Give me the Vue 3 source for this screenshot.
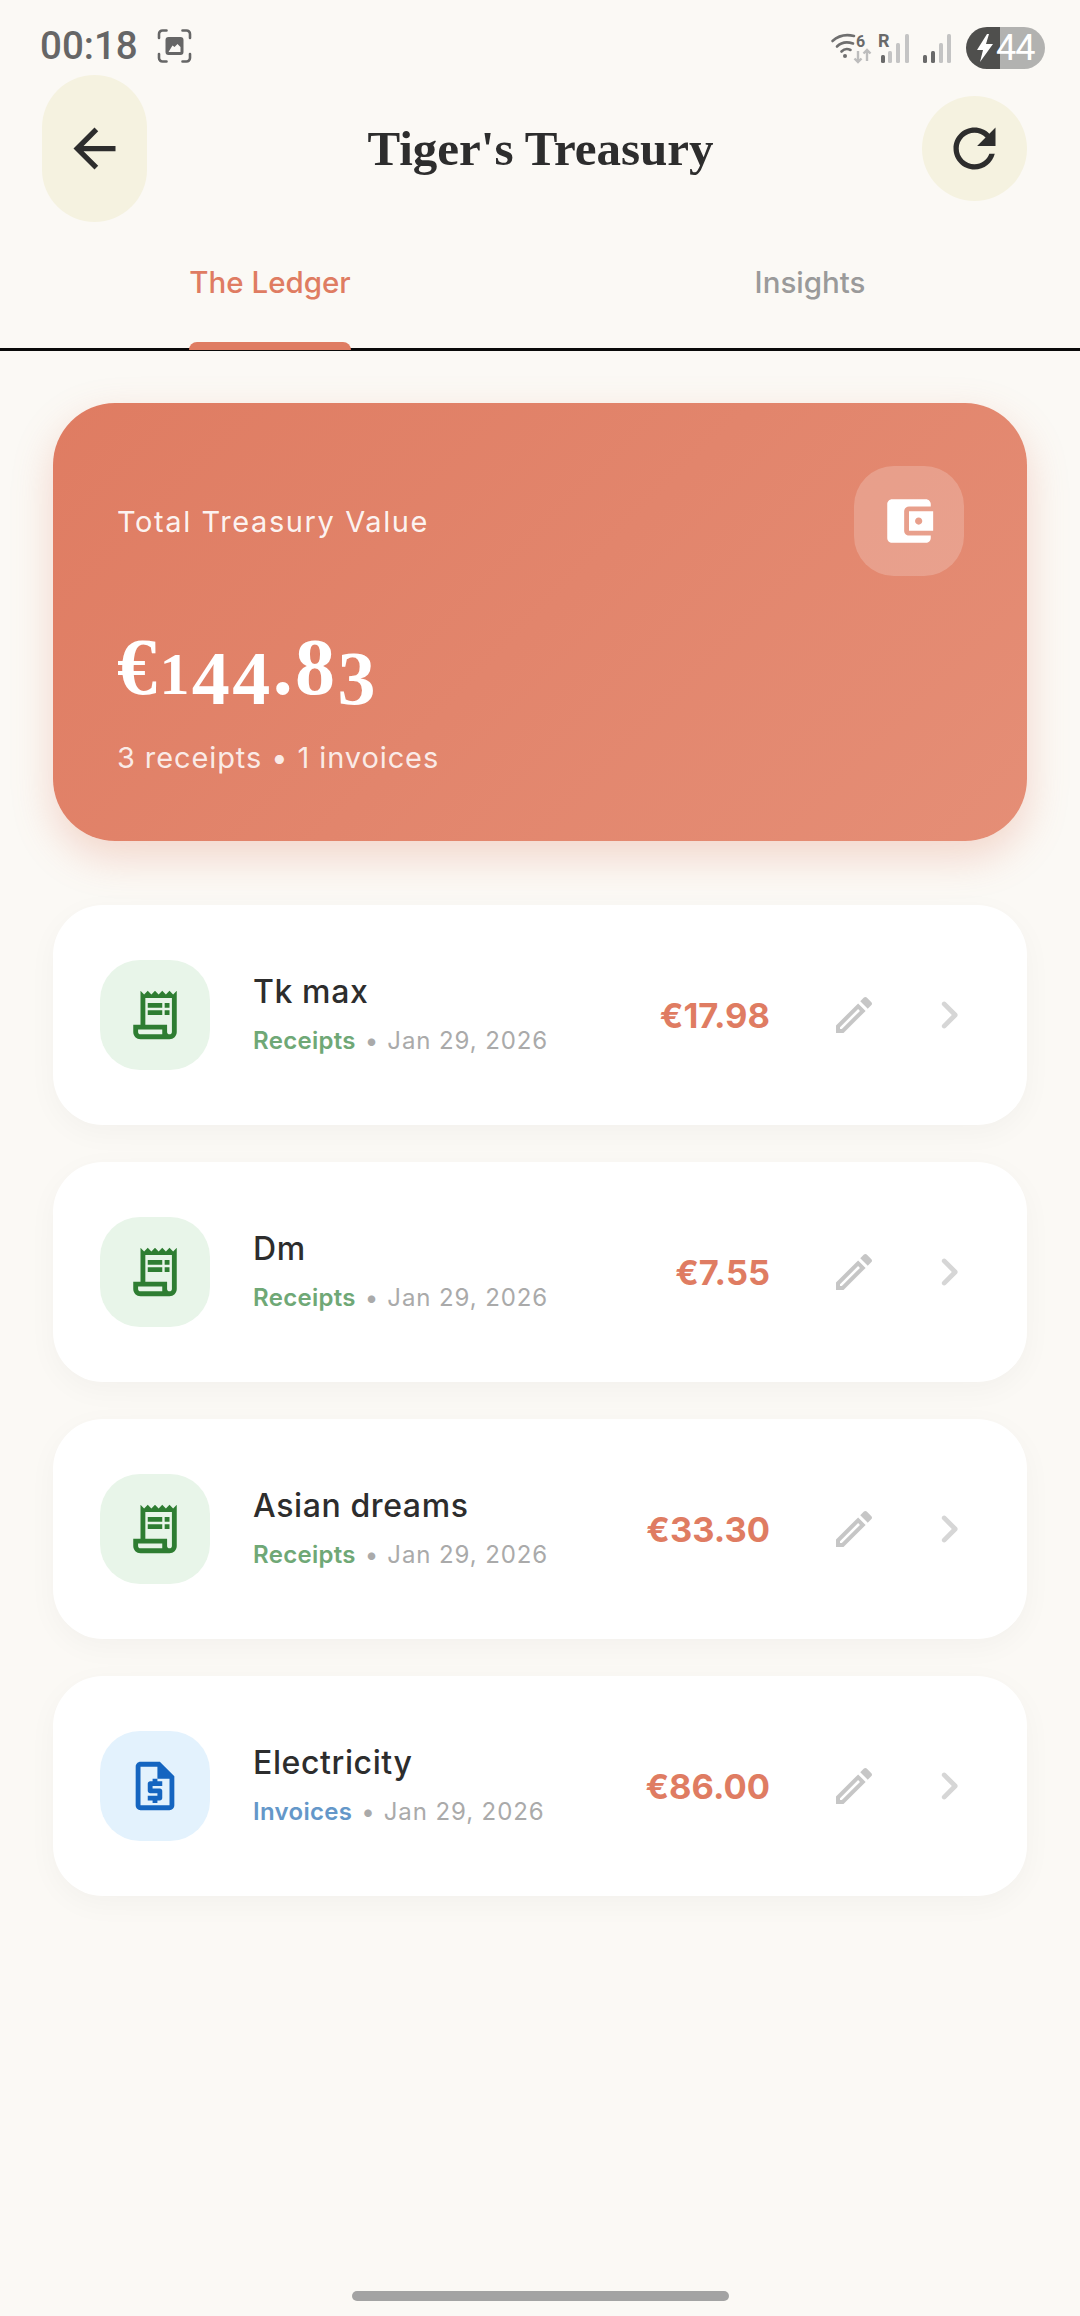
<script setup>
const items = [
  { name: 'Tk max', kind: 'Receipts', type: 'receipt', date: 'Jan 29, 2026', amount: '€17.98' },
  { name: 'Dm', kind: 'Receipts', type: 'receipt', date: 'Jan 29, 2026', amount: '€7.55' },
  { name: 'Asian dreams', kind: 'Receipts', type: 'receipt', date: 'Jan 29, 2026', amount: '€33.30' },
  { name: 'Electricity', kind: 'Invoices', type: 'invoice', date: 'Jan 29, 2026', amount: '€86.00' }
]
</script>

<template>
  <div class="page">
    <div class="status">
      <div class="status-left">
        <span class="time">00:18</span>
        <svg class="shot" viewBox="0 0 34 34" fill="none">
          <path d="M9 1.5H5A3.5 3.5 0 0 0 1.500 5v4M25 1.500h4A3.500 3.500 0 0 1 32.500 5v4M9 32.500H5A3.500 3.500 0 0 1 1.500 29v-4M25 32.500h4a3.500 3.500 0 0 0 3.500-3.500v-4" stroke="#666" stroke-width="2.600" stroke-linecap="round"/>
          <path fill-rule="evenodd" d="M11 8h12a3 3 0 0 1 3 3v12a3 3 0 0 1-3 3H11a3 3 0 0 1-3-3V11a3 3 0 0 1 3-3zm0 15h12v-5l-3-3-3 3-2-1.500z" fill="#666"/>
        </svg>
      </div>
      <div class="status-right">
        <svg class="net" width="124" height="36" viewBox="0 0 124 36" fill="none">
          <g stroke="#6f6f6f" stroke-width="2.600" stroke-linecap="round">
            <path d="M2.500 11C8 6 16 4 24 6"/>
            <path d="M7 16.500c4-4 10-5 16-3"/>
            <path d="M11.500 21.500c2.500-2.500 6-3 9-1.500"/>
          </g>
          <circle cx="15" cy="26" r="2" fill="#6f6f6f"/>
          <text x="26" y="17" class="net-t">6</text>
          <g stroke="#bdbdbd" stroke-width="2.400">
            <path d="M28 21v11M24.500 28.500 28 32l3.500-3.500"/>
            <path d="M37 31V20M33.500 23.500 37 20l3.500 3.500"/>
          </g>
          <text x="48" y="17" class="net-r">R</text>
          <rect x="51" y="25" width="4" height="8" rx="1.500" fill="#6a6a6a"/>
          <rect x="58" y="21" width="4" height="12" rx="1.500" fill="#c4c4c4"/>
          <rect x="66" y="13" width="4" height="20" rx="1.500" fill="#c4c4c4"/>
          <rect x="75" y="4" width="4" height="29" rx="1.500" fill="#c4c4c4"/>
          <rect x="93" y="25" width="4" height="8" rx="1.500" fill="#6a6a6a"/>
          <rect x="101" y="21" width="4" height="12" rx="1.500" fill="#6a6a6a"/>
          <rect x="109" y="13" width="4" height="20" rx="1.500" fill="#c4c4c4"/>
          <rect x="117" y="4" width="4" height="29" rx="1.500" fill="#c4c4c4"/>
        </svg>
        <div class="battery">
          <svg class="bolt" width="18" height="28" viewBox="0 0 18 28"><path d="M11 0 1 16h6l-3 12L17 10h-7l3-10z" fill="#fff"/></svg>
          <span class="level">44</span>
        </div>
      </div>
    </div>

    <header class="head">
      <button class="round back" type="button">
        <svg width="63" height="63" viewBox="0 0 24 24"><path d="M20 11H7.830l5.590-5.590L12 4l-8 8 8 8 1.410-1.410L7.830 13H20v-2z" fill="#2d2d2d"/></svg>
      </button>
      <h1 class="title">Tiger's Treasury</h1>
      <button class="round refresh" type="button">
        <svg width="63" height="63" viewBox="0 0 24 24"><path d="M17.650 6.350C16.200 4.900 14.210 4 12 4c-4.420 0-7.990 3.580-7.990 8s3.570 8 7.990 8c3.730 0 6.840-2.550 7.730-6h-2.080c-.820 2.330-3.040 4-5.650 4-3.310 0-6-2.690-6-6s2.690-6 6-6c1.660 0 3.140.690 4.220 1.780L13 11h7V4l-2.350 2.350z" fill="#2d2d2d"/></svg>
      </button>
    </header>

    <nav class="tabs">
      <div class="tab on"><span class="tab-label">The Ledger</span></div>
      <div class="tab"><span class="tab-label">Insights</span></div>
    </nav>

    <main class="content">
      <section class="hero">
        <div class="hero-top">
          <span class="hero-label">Total Treasury Value</span>
          <div class="hero-icon">
            <svg width="58" height="58" viewBox="0 0 24 24"><path fill-rule="evenodd" d="M21 18v1c0 1.100-.900 2-2 2H5c-1.110 0-2-.900-2-2V5c0-1.100.890-2 2-2h14c1.100 0 2 .900 2 2v1h-9c-1.110 0-2 .900-2 2v8c0 1.100.890 2 2 2h9zm-9-2h10V8H12v8zm4-2.500c-.830 0-1.500-.670-1.500-1.500s.670-1.500 1.500-1.500 1.500.670 1.500 1.500-.670 1.500-1.500 1.500z" fill="#fff"/></svg>
          </div>
        </div>
        <div class="hero-amount">€<span class="os-one">1</span><span class="os-low">44</span>.8<span class="os-low">3</span></div>
        <div class="hero-sub">3 receipts • 1 invoices</div>
      </section>

      <article v-for="item in items" :key="item.name" class="row">
        <div class="badge" :class="item.type">
          <svg v-if="item.type === 'receipt'" width="58" height="58" viewBox="0 0 24 24" fill="#2e7d32">
            <path fill-rule="evenodd" d="M19.500 3.500 18 2l-1.500 1.500L15 2l-1.500 1.500L12 2l-1.500 1.500L9 2 7.500 3.500 6 2v14H3v3c0 1.660 1.340 3 3 3h12c1.660 0 3-1.340 3-3V2l-1.500 1.500zM15 20H6c-.550 0-1-.450-1-1v-1h10v2zm4-1c0 .550-.450 1-1 1s-1-.450-1-1v-3H8V5h11v14z"/>
            <path d="M9 7h6v2H9zm7 0h2v2h-2zm-7 3h6v2H9zm7 0h2v2h-2z"/>
          </svg>
          <svg v-else width="58" height="58" viewBox="0 0 24 24" fill="#1565c0">
            <path fill-rule="evenodd" d="M14 2H6c-1.100 0-1.990.900-1.990 2L4 20c0 1.100.890 2 1.990 2H18c1.100 0 2-.900 2-2V8l-6-6zM6 20V4h7v5h5v11H6z"/>
            <path d="M11 19h2v-1h1c.550 0 1-.450 1-1v-3c0-.550-.450-1-1-1h-3v-1h4v-2h-2V9h-2v1h-1c-.550 0-1 .450-1 1v3c0 .550.450 1 1 1h3v1H9v2h2v1z"/>
          </svg>
        </div>
        <div class="info">
          <div class="name">{{ item.name }}</div>
          <div class="meta">
            <span class="kind" :class="item.type">{{ item.kind }}</span>
            <span class="dot">•</span>
            <span class="date">{{ item.date }}</span>
          </div>
        </div>
        <div class="amount">{{ item.amount }}</div>
        <svg class="pencil" width="48" height="48" viewBox="0 0 24 24"><path d="M14.060 9.020l.920.920L5.920 19H5v-.920l9.060-9.060M17.660 3c-.250 0-.510.100-.700.290l-1.830 1.830 3.750 3.750 1.830-1.830c.390-.390.390-1.020 0-1.410l-2.340-2.340c-.200-.200-.450-.290-.710-.290zm-3.600 3.190L3 17.250V21h3.750L17.810 9.940l-3.750-3.750z" fill="#c6c6c6"/></svg>
        <svg class="chev" width="58" height="58" viewBox="0 0 24 24"><path d="M9.290 6.710c-.390.390-.390 1.020 0 1.410L13.170 12l-3.880 3.880c-.390.390-.390 1.020 0 1.410.390.390 1.020.390 1.410 0l4.590-4.590c.390-.390.390-1.020 0-1.410L10.700 6.700c-.380-.380-1.020-.380-1.410.010z" fill="#d6d6d6"/></svg>
      </article>
    </main>

    <div class="home"></div>
  </div>
</template>

<style>
html, body { margin: 0; background: #fbf9f5; }
</style>

<style scoped>
.page {
  width: 1080px;
  height: 2316px;
  background: #fbf9f5;
  display: flex;
  flex-direction: column;
  font-family: Inter, "Liberation Sans", sans-serif;
  color: #2d2d2d;
  overflow: hidden;
}
.status {
  height: 75px;
  box-sizing: border-box;
  padding: 24px 35px 0 40px;
  display: flex;
  justify-content: space-between;
  align-items: flex-start;
}
.status-left { display: flex; align-items: center; gap: 19px; height: 44px; }
.time { font: 500 38.500px/44px Roboto, sans-serif; color: #666; }
.shot { width: 35px; height: 34px; }
.status-right { display: flex; align-items: flex-start; gap: 12px; margin-top: 3px; }
.net { margin-top: 3px; }
.net-t { font: 700 16px Roboto, sans-serif; fill: #6a6a6a; }
.net-r { font: 700 18px Roboto, sans-serif; fill: #6a6a6a; }
.battery {
  width: 79px;
  height: 42px;
  border-radius: 21px;
  background: linear-gradient(90deg, #4f4f4d 0 34px, #b2b2b0 34px);
  display: flex;
  align-items: center;
  padding-left: 10px;
  box-sizing: border-box;
}
.bolt { flex: none; }
.level { font: 400 36px/42px Roboto, sans-serif; color: #fff; margin-left: 2px; letter-spacing: -1px; }

.head {
  height: 147px;
  box-sizing: border-box;
  padding: 0 53px 0 42px;
  display: flex;
  align-items: center;
  justify-content: space-between;
}
.round {
  border: 0;
  padding: 0;
  width: 105px;
  flex: none;
  background: #f5f2e0;
  border-radius: 53px;
  display: flex;
  align-items: center;
  justify-content: center;
}
.back { height: 147px; }
.refresh { height: 105px; }
.title {
  margin: 0;
  padding-left: 12px;
  font: 700 49px/60px "Liberation Serif", serif;
  color: #2d2d2d;
  flex: 1;
  text-align: center;
}

.tabs {
  height: 129px;
  box-sizing: border-box;
  border-bottom: 3px solid #0a0a0a;
  display: flex;
}
.tab {
  flex: 1;
  display: flex;
  justify-content: center;
  font-weight: 500;
  font-size: 29.500px;
  line-height: 36px;
  color: #9a9a9a;
}
.tab-label {
  display: block;
  padding-top: 42px;
  box-sizing: border-box;
  height: 126px;
  position: relative;
}
.tab.on { color: #df7c62; }
.tab.on .tab-label::after {
  content: "";
  position: absolute;
  left: 0;
  right: 0;
  bottom: -2px;
  height: 8px;
  background: #df7c62;
  border-radius: 8px 8px 0 0;
}

.content {
  padding: 52px 53px 0;
  display: flex;
  flex-direction: column;
  gap: 36.500px;
}
.hero {
  height: 438px;
  box-sizing: border-box;
  padding: 63px 63px 0 64px;
  margin-bottom: 27px;
  border-radius: 62px;
  color: #fff;
  background: linear-gradient(135deg, #df7c62 0%, #e58e76 100%);
  box-shadow: 0 16px 40px rgba(224, 122, 95, 0.28);
}
.hero-top { display: flex; justify-content: space-between; align-items: center; }
.hero-label { font-size: 29px; letter-spacing: 1.600px; color: rgba(255, 255, 255, 0.92); }
.hero-icon {
  width: 110px;
  height: 110px;
  border-radius: 40px;
  background: rgba(255, 255, 255, 0.2);
  display: flex;
  align-items: center;
  justify-content: center;
}
.hero-amount {
  margin-top: 46px;
  height: 90px;
  font: 700 80px/90px "Liberation Serif", serif;
  letter-spacing: 2.400px;
}
.os-one { font-size: 60px; }
.os-low { font-size: 76px; vertical-align: -10px; line-height: 0; }
.hero-sub {
  margin-top: 28px;
  font-size: 29px;
  line-height: 36px;
  letter-spacing: 0.900px;
  color: rgba(255, 255, 255, 0.85);
}

.row {
  height: 220.500px;
  box-sizing: border-box;
  padding: 0 49px 0 47px;
  background: #fff;
  border-radius: 50px;
  box-shadow: 0 8px 30px rgba(0, 0, 0, 0.035);
  display: flex;
  align-items: center;
}
.badge {
  width: 110px;
  height: 110px;
  border-radius: 40px;
  flex: none;
  display: flex;
  align-items: center;
  justify-content: center;
}
.badge.receipt { background: #e8f5e9; }
.badge.invoice { background: #e3f2fd; }
.info { flex: 1; min-width: 0; margin-left: 43px; padding-bottom: 2px; }
.name { font-size: 32px; line-height: 40px; font-weight: 500; color: #2d2d2d; letter-spacing: 0.600px; }
.meta { display: flex; align-items: center; margin-top: 14px; font-size: 24px; line-height: 30px; color: #aaa; }
.kind { font-weight: 600; letter-spacing: 0.300px; }
.kind.receipt { color: #6fa876; }
.kind.invoice { color: #6497c9; }
.dot { margin: 0 9px; }
.date { letter-spacing: 0.900px; color: #aaa; }
.amount { font-size: 34.500px; font-weight: 700; color: #df7c62; padding-top: 2px; }
.pencil { margin-left: 60px; flex: none; }
.chev { margin-left: 42px; flex: none; }

.home {
  margin: auto auto 15px;
  width: 377px;
  height: 10px;
  border-radius: 5px;
  background: #a3a3a3;
}
</style>
